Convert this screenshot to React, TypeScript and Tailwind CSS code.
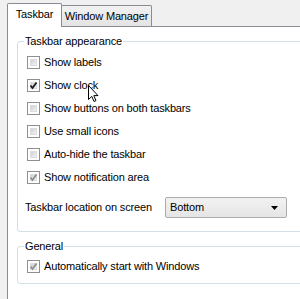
function CheckBox({ checked = false, dim = false }: { checked?: boolean; dim?: boolean }) {
  return (
    <span className="relative inline-block w-[13px] h-[13px] shrink-0 border border-[#8e8f8f] bg-white">
      <span className="absolute inset-[2px] bg-gradient-to-br from-[#cdd1d6] to-[#f4f4f4] border border-[#dcdcdc]" />
      {checked && (
        <svg className="absolute inset-0" width="11" height="11" viewBox="0 0 11 11">
          <path
            d="M2.5 5.5 L4.5 8 L8.5 2.5"
            fill="none"
            stroke={dim ? "#8f8f8f" : "#1c1c1c"}
            strokeWidth="1.8"
          />
        </svg>
      )}
    </span>
  );
}

function Row({ label, checked, dim }: { label: string; checked?: boolean; dim?: boolean }) {
  return (
    <div className="h-[23px] flex items-center gap-[4px] pl-[2px]">
      <CheckBox checked={checked} dim={dim} />
      <span>{label}</span>
    </div>
  );
}

function Group({ title, children, className }: { title: string; children: React.ReactNode; className?: string }) {
  return (
    <div className={"relative border border-[#d5dfe5] rounded-[3px] pl-[7px] " + (className ?? "")}>
      <span className="absolute left-[6px] -top-[8px] bg-white px-[1px] leading-[14px]">{title}</span>
      {children}
    </div>
  );
}

export default function App() {
  return (
    <div
      className="relative w-[300px] h-[299px] overflow-hidden bg-[#f0f0f0] text-[11px] tracking-[-0.15px] text-black"
      style={{ fontFamily: '"Liberation Sans", Arial, sans-serif' }}
    >
      {/* tab strip */}
      <div className="flex items-end h-[27px] pl-[7px]">
        <div className="relative z-10 h-[24px] w-[55px] bg-white border border-b-0 border-[#898c95] rounded-t-[2px] flex items-center justify-center pb-[2px]">
          Taskbar
        </div>
        <div className="h-[21px] w-[91px] -ml-px mb-px bg-gradient-to-b from-[#f2f2f2] to-[#e3e3e3] border border-b-0 border-[#898c95] rounded-t-[2px] flex items-center justify-center">
          Window Manager
        </div>
      </div>

      {/* tab page */}
      <div className="-mt-px ml-[7px] w-[400px] h-[280px] bg-white border-l border-t border-[#898c95] pl-[9px] pt-[14px]">
        <Group title="Taskbar appearance" className="h-[191px] pt-[9px]">
          <Row label="Show labels" />
          <Row label="Show clock" checked />
          <Row label="Show buttons on both taskbars" />
          <Row label="Use small icons" />
          <Row label="Auto-hide the taskbar" />
          <Row label="Show notification area" checked dim />
          <div className="mt-[8px] h-[21px] flex items-center">
            <span className="w-[140px]">Taskbar location on screen</span>
            <div className="w-[122px] h-[21px] border border-[#acacac] rounded-[2px] bg-gradient-to-b from-[#f2f2f2] to-[#e5e5e5] flex items-center pl-[4px] pr-[8px]">
              <span className="flex-1">Bottom</span>
              <svg width="7" height="4" viewBox="0 0 7 4">
                <path d="M0 0 H7 L3.5 4 Z" fill="#000" />
              </svg>
            </div>
          </div>
        </Group>

        <Group title="General" className="mt-[14px] h-[38px] pt-[8px]">
          <Row label="Automatically start with Windows" checked dim />
        </Group>
      </div>

      {/* mouse pointer */}
      <svg className="absolute left-[88px] top-[85px]" width="12" height="19" viewBox="0 0 12 19">
        <path
          d="M0.5 0.5 L0.5 14.5 L3.8 11.4 L6 16.5 L8 15.6 L5.8 10.6 L10 10.6 Z"
          fill="#fff"
          stroke="#000"
          strokeWidth="1"
          strokeLinejoin="round"
        />
      </svg>
    </div>
  );
}
